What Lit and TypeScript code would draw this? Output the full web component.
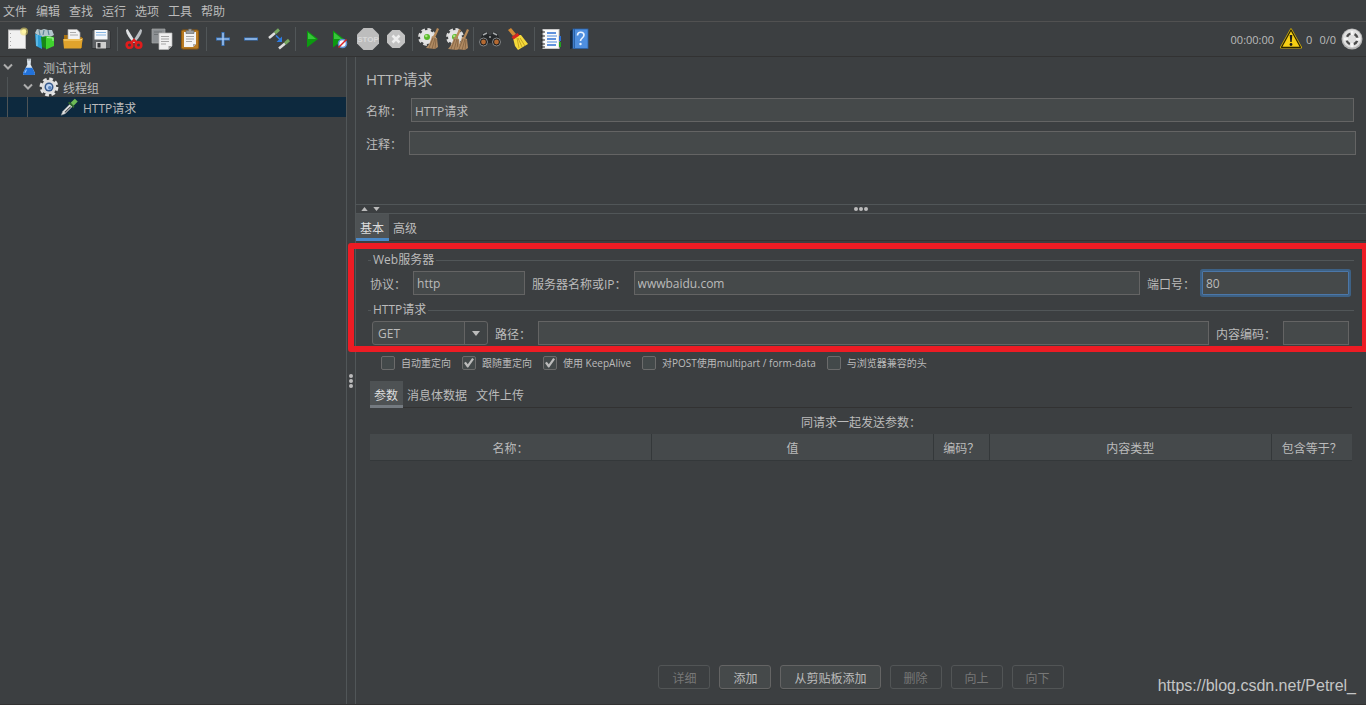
import { LitElement, html, css, svg, nothing } from "lit";
import { customElement, property } from "lit/decorators.js";
import { classMap } from "lit/directives/class-map.js";

const broom = svg`
  <path d="M20 1l2 1-4 9-2-1z" fill="#b88a58"/>
  <path d="M15 9l5 2 1 9-3 2-9-1c3-3 5-7 6-12z" fill="#b08a62"/>
  <path d="M16 11l-4 10M18 11l-3 11M19 12l-1 10" stroke="#80603f" stroke-width=".8" fill="none"/>`;

const smallGear = svg`
  <circle cx="10" cy="10" r="7.600" fill="none" stroke="#dcdcdc" stroke-width="2.600" stroke-dasharray="3.600 2.400"/>
  <circle cx="10" cy="10" r="7" fill="#e4e4e4"/>
  <circle cx="10" cy="10" r="3" fill="#58b82a"/>
  <circle cx="9.300" cy="9" r="1.300" fill="#a8e57e"/>`;

const icons: Record<string, unknown> = {
  blank: svg`
    <rect x="3.500" y="3" width="17" height="18.500" fill="#f1f1f1" stroke="#b9b9b9"/>
    <path d="M5.500 6v13" stroke="#aaa" stroke-dasharray="1 3"/>
    <circle cx="19" cy="4.500" r="4" fill="#f3e06a" opacity=".55"/>
    <circle cx="19" cy="4.500" r="2.200" fill="#fff6a4"/>`,
  templates: svg`
    <path d="M2 6l2-4 4 1 3-1 4 1 4 0 2 5-6 3-9-1z" fill="#b4c6cc"/>
    <path d="M6 3l1 5M11 3l-1 5M15 3l1 5" stroke="#5f8597" stroke-width="1.200"/>
    <path d="M2 7l7 2v13l-6-3z" fill="#2b9dd6"/>
    <path d="M4 8v11" stroke="#8ad2f5"/>
    <path d="M8 10l6-1v13l-5-2z" fill="#178817"/>
    <path d="M13 9l8 1v9l-8 3.500z" fill="#3fd22e"/>
    <path d="M14 10.500l6 .5v3" stroke="#a9f59d" fill="none"/>`,
  open: svg`
    <path d="M3 8h5l2 2h11v11H3z" fill="#a87110"/>
    <path d="M7 2.500h9l3 3v9H7z" fill="#f3f3f3" stroke="#a9a9a9" stroke-width=".7"/>
    <path d="M9 5.500h6M9 8h8" stroke="#999" stroke-width=".8"/>
    <path d="M2 12h17l3-1-2 10.500H3z" fill="#e0a32c"/>
    <path d="M3 13h16l2-.6" stroke="#ffd87b" fill="none"/>`,
  save: svg`
    <path d="M3 3h17l1.500 1.500V21.500H3z" fill="#5d6063" stroke="#2e3032" stroke-width=".8"/>
    <rect x="5.500" y="3" width="13" height="9.500" fill="#f4f7fa"/>
    <path d="M7 5.500h10M7 8h10" stroke="#85b5e2" stroke-width="1.200"/>
    <rect x="7" y="15" width="10" height="6.500" fill="#cfcfcf"/>
    <rect x="8.500" y="16" width="3" height="4.500" fill="#35373a"/>`,
  cut: svg`
    <path d="M5.500 2l8 13-2 1C8 12 4 7 4 3z" fill="#dfe2e4"/>
    <path d="M18.500 2l-8 13 2 1c3.500-4 7.500-9 7.500-13z" fill="#b9bec2"/>
    <circle cx="7.500" cy="18" r="2.800" fill="none" stroke="#e01c1c" stroke-width="2.600"/>
    <circle cx="16.500" cy="18" r="2.800" fill="none" stroke="#e01c1c" stroke-width="2.600"/>
    <path d="M9 16l3-3 3 3" stroke="#e01c1c" stroke-width="2.400" fill="none"/>`,
  copy: svg`
    <path d="M2 2h13v14H2z" fill="#8c9093" stroke="#a3a6a8" stroke-width=".7"/>
    <path d="M4 5h8M4 7.500h4" stroke="#6e7275"/>
    <path d="M9 6h13v13l-3.500 3.500H9z" fill="#f0f0f0" stroke="#b7b7b7" stroke-width=".7"/>
    <path d="M11 9.500h8M11 12h8M11 14.500h8M11 17h5" stroke="#a5a5a5"/>
    <path d="M22 19h-3.500v3.500z" fill="#9e9e9e"/>`,
  paste: svg`
    <rect x="3.500" y="3" width="17" height="19" rx="1.500" fill="#b87a22" stroke="#8d590f"/>
    <path d="M6 5h12v12l-3 3H6z" fill="#f3f3f3"/>
    <path d="M8 9.500h8M8 12h8M8 14.500h6" stroke="#a5a5a5"/>
    <path d="M18 17h-3v3z" fill="#aaa"/>
    <path d="M8 6.500V3.500h2.500V2h3v1.500H16v3z" fill="#9a9d9f" stroke="#5f6163" stroke-width=".6"/>`,
  plus: svg`<path d="M12 5v14M5 12h14" stroke="#3b78c2" stroke-width="3"/><path d="M12 6v12M6 12h12" stroke="#b9d5f7" stroke-width="1.200"/>`,
  minus: svg`<path d="M5 12h14" stroke="#3b78c2" stroke-width="3"/><path d="M6 12h12" stroke="#b9d5f7" stroke-width="1.200"/>`,
  toggle: svg`
    <path d="M2 11L8 6" stroke="#dedede" stroke-width="2.600"/><path d="M8 6l4-3.500" stroke="#76a860" stroke-width="3"/>
    <path d="M12 21.500l6-5" stroke="#dedede" stroke-width="2.600"/><path d="M18 16.500l4-3.500" stroke="#76a860" stroke-width="3"/>
    <path d="M9 8.500l4 4" stroke="#2f7be0" stroke-width="1.600"/><path d="M15 9.500V15H9.500z" fill="#2f7be0"/>`,
  start: svg`<path d="M7 3.500L18 12 7 20.500z" fill="#0c9a10"/><path d="M8 5.500L16 12H8z" fill="#37c53a"/>`,
  startNoPause: svg`
    <path d="M5 3.500L16 12 5 20.500z" fill="#0c9a10"/><path d="M6 5.500L14 12H6z" fill="#37c53a"/>
    <circle cx="14.500" cy="16.500" r="4" fill="#f4f8ff" stroke="#5d8fd0" stroke-width="1.600"/>
    <path d="M10.500 20.500l8-8" stroke="#dd2020" stroke-width="1.500"/>`,
  stop: svg`
    <path d="M7.500 1h9L23 7.500v9L16.500 23h-9L1 16.500v-9z" fill="#bdbdbd"/>
    <text x="12" y="15" text-anchor="middle" font-size="8" font-weight="700" font-family="Liberation Sans, sans-serif" fill="#d9d9d9">STOP</text>`,
  shutdown: svg`
    <path d="M8.300 3h7.400L21 8.300v7.400L15.700 21H8.300L3 15.700V8.300z" fill="#c2c2c2"/>
    <path d="M8.500 8.500l7 7M15.500 8.500l-7 7" stroke="#eee" stroke-width="2.600"/>`,
  clear: svg`${smallGear}${broom}`,
  clearAll: svg`${smallGear}<g transform="translate(-6 1)">${broom}</g><g transform="translate(2 1)">${broom}</g>`,
  search: svg`
    <path d="M5 6l4-1 2 3h2l2-3 4 1 4 9-4 4-6-3h-2l-6 3-4-4z" fill="#25282a"/>
    <path d="M5 8l4-2M15 6l4 2M11 10h2" stroke="#a5a8aa" stroke-width="1.400"/>
    <circle cx="5.500" cy="15" r="4" fill="#1b1c1d" stroke="#85888a"/><circle cx="5.500" cy="15" r="2.400" fill="#b56a32"/>
    <circle cx="18.500" cy="15" r="4" fill="#1b1c1d" stroke="#85888a"/><circle cx="18.500" cy="15" r="2.400" fill="#b56a32"/>`,
  reset: svg`
    <path d="M2 3l3-2 5 6-3 2z" fill="#d28a36"/>
    <path d="M9 8l6 0 7 9-10 6-3-4-2-8z" fill="#f4d93a"/>
    <path d="M11 11l2 10M14 11l5 8M12 11l4 9" stroke="#b8951a" stroke-width=".8"/>
    <path d="M5.500 10l6-4 2 2.500-6 4z" fill="#d7261e"/>`,
  functions: svg`
    <rect x="4" y="2.500" width="16" height="19" fill="#fafafa" stroke="#c9c9c9"/>
    <path d="M8 6h9M8 12h9M8 18h9" stroke="#2d6fd2" stroke-width="1.600"/><path d="M8 9h10M8 15h10" stroke="#4d8ae0"/>
    <path d="M2 5h4M2 9h4M2 13h4M2 17h4M2 20h4" stroke="#222" stroke-width="1.200"/>
    <path d="M20 9h2v5h-2z" fill="#2d6fd2"/><path d="M20 15h2v5h-2z" fill="#21a321"/>`,
  help: svg`
    <path d="M3 4l3-2v19l-3 1z" fill="#16283d"/>
    <rect x="6" y="2" width="15" height="19.500" fill="#4f8fdf" stroke="#2a62a8" stroke-width=".8"/>
    <path d="M7.500 2v19" stroke="#2a62a8"/>
    <path d="M10.500 8.500c0-4.500 6.500-4 6.500-.5 0 3-3.500 3-3.500 6" stroke="#eaf3ff" stroke-width="1.600" fill="none"/>
    <circle cx="13.500" cy="17" r="1.200" fill="#eaf3ff"/>`,
  warning: svg`
    <path d="M12 2.500L22 20.500H2z" fill="#f6cf14" stroke="#c9a80c" stroke-width="2.200" stroke-linejoin="round"/>
    <path d="M12 3L21.500 20.300h-19z" fill="#f6cf14" stroke="#2b2500" stroke-width="1.200" stroke-linejoin="round"/>
    <path d="M10.700 8h2.600l-.6 7h-1.400z" fill="#1d1d1d"/><circle cx="12" cy="17.500" r="1.400" fill="#1d1d1d"/>`,
  globe: svg`
    <circle cx="12" cy="12" r="10.500" fill="#b4b4b4"/><circle cx="12" cy="11.500" r="9.300" fill="#e0e0e0"/>
    <circle cx="12" cy="12" r="5.500" fill="none" stroke="#4b4b4b" stroke-width="2.400" stroke-dasharray="4.640 4" stroke-dashoffset="-2"/>
    <path d="M12 4v4M12 16v4M4 12h4M16 12h4" stroke="#f5f5f5" stroke-width="2.600"/>`,
  flask: svg`
    <path d="M9.500 2h5v1l-.5 6L19 19c.6 1.700 0 2.500-1.500 2.500h-11C5 21.500 4.400 20.700 5 19L10 9l-.5-6z" fill="#dde6ee"/>
    <path d="M8 13h8l3 6c.6 1.700 0 2.500-1.500 2.500h-11C5 21.500 4.400 20.700 5 19z" fill="#2372d9"/>
    <path d="M9 15l-2 4" stroke="#8fc1ff" stroke-width="1.500"/>
    <path d="M10 3.500h4" stroke="#777"/>`,
  gear: svg`
    <circle cx="12" cy="12" r="9.500" fill="none" stroke="#e5e5e5" stroke-width="3.600" stroke-dasharray="4.400 3.060"/>
    <circle cx="12" cy="12" r="8.800" fill="#dedede"/>
    <circle cx="12" cy="12" r="5.400" fill="#34588c"/><circle cx="12" cy="12" r="3.600" fill="#bcd3f2"/>
    <circle cx="13" cy="13" r="2.200" fill="#5b86c0"/>`,
  dropper: svg`
    <path d="M2.500 22l2-5 9-9 3 3-9 9z" fill="#e2e4e5" stroke="#7d8082" stroke-width=".6"/>
    <path d="M7 18.500l7-7" stroke="#4a4d4f" stroke-width="1.400"/>
    <path d="M11.500 6.500l6.500 6" stroke="#2f6a2a" stroke-width="2"/>
    <path d="M14 7l5-5 3.500 3.500-5 5z" fill="#6dbb55"/>`,
};

const base = css`
  :host { display: block; box-sizing: border-box; }
  *, *::before, *::after { box-sizing: border-box; }
  button, input, select { font: inherit; color: inherit; margin: 0; }
  .icon { display: block; width: 24px; height: 24px; flex: none; }
`;

const icon = (name: string) =>
  html`<svg class="icon" viewBox="0 0 24 24" aria-hidden="true">${icons[name]}</svg>`;

@customElement("app-toolbar")
class AppToolbar extends LitElement {
  static styles = [base, css`
    .menu { display: flex; height: 22px; border-bottom: 1px solid #515151; }
    .menu button { border: 0; background: none; padding: 2px 6px 0 3px; line-height: 19px; white-space: nowrap; }
    .bar { display: flex; align-items: center; height: 35px; padding: 0 2px 1px 3px; border-bottom: 1px solid #323232; }
    .tool { width: 28px; height: 28px; border: 0; padding: 2px; background: none; }
    .sep { width: 1px; height: 24px; margin: 0 2px; background: #515658; }
    .status { margin-left: auto; display: flex; align-items: center; font-size: 11px; }
    .status span { padding-top: 2px; }
    .time { margin-right: 5px; }
    .errors { margin: 0 7px 0 3px; }
    .threads { margin-right: 4px; }
  `];

  private menus = ["文件", "编辑", "查找", "运行", "选项", "工具", "帮助"];

  private groups: [string, string][][] = [
    [["blank", "新建"], ["templates", "模板"], ["open", "打开"], ["save", "保存"]],
    [["cut", "剪切"], ["copy", "复制"], ["paste", "粘贴"]],
    [["plus", "展开"], ["minus", "折叠"], ["toggle", "切换"]],
    [["start", "启动"], ["startNoPause", "不停顿开始"], ["stop", "停止"], ["shutdown", "关闭"]],
    [["clear", "清除"], ["clearAll", "清除全部"]],
    [["search", "查找"], ["reset", "重置查找"]],
    [["functions", "函数助手"], ["help", "帮助"]],
  ];

  render() {
    return html`
      <nav class="menu">${this.menus.map((m) => html`<button>${m}</button>`)}</nav>
      <div class="bar">
        ${this.groups.map((g, i) => html`
          ${i ? html`<span class="sep"></span>` : nothing}
          ${g.map(([name, label]) => html`<button class="tool" aria-label=${label}>${icon(name)}</button>`)}
        `)}
        <div class="status">
          <span class="time">00:00:00</span>${icon("warning")}
          <span class="errors">0</span><span class="threads">0/0</span>${icon("globe")}
        </div>
      </div>`;
  }
}

@customElement("plan-tree")
class PlanTree extends LitElement {
  static styles = [base, css`
    .row { display: flex; align-items: center; height: 20px; padding-left: 2px; white-space: nowrap; }
    .row.selected { background: #0d293e; }
    .guide { width: 20px; height: 20px; padding-left: 5px; }
    .guide::before { content: ""; display: block; width: 1px; height: 100%; background: #4f5456; }
    .twisty { width: 12px; margin-right: 5px; }
    .twisty svg { display: block; width: 12px; height: 12px; }
    .icon { width: 20px; height: 20px; margin-right: 4px; }
    .name { padding-top: 3px; }
  `];

  private rows = [
    { level: 0, icon: "flask", text: "测试计划", open: true },
    { level: 1, icon: "gear", text: "线程组", open: true },
    { level: 2, icon: "dropper", text: "HTTP请求", open: false },
  ];

  render() {
    return html`<div role="tree">${this.rows.map((r) => html`
      <div role="treeitem" class=${classMap({ row: true, selected: !r.open })}>
        ${Array.from({ length: r.level }, () => html`<span class="guide"></span>`)}
        <span class="twisty">${r.open
          ? html`<svg viewBox="0 0 12 12"><path d="M2 3.500l4 4 4-4" fill="none" stroke="#adadad" stroke-width="2"/></svg>`
          : nothing}</span>
        ${icon(r.icon)}<span class="name">${r.text}</span>
      </div>`)}</div>`;
  }
}

@customElement("tab-strip")
class TabStrip extends LitElement {
  @property({ attribute: false }) tabs: string[] = [];
  @property({ type: Boolean }) muted = false;

  static styles = [base, css`
    .strip { display: flex; height: 27px; border-bottom: 1px solid #323232; }
    button {
      height: 27px; border: 0; border-bottom: 3px solid transparent; background: none;
      padding: 5px 5px 0 4px; line-height: 18px; white-space: nowrap;
    }
    .active { background: #4e5254; border-bottom-color: #4a88c7; color: #dddddd; }
    .muted { border-bottom-color: #747a80; }
  `];

  render() {
    return html`<div class="strip" role="tablist">${this.tabs.map((t, i) => html`
      <button role="tab" aria-selected=${i === 0}
        class=${classMap({ active: i === 0, muted: i === 0 && this.muted })}>${t}</button>`)}</div>`;
  }
}

@customElement("http-request-panel")
class HttpRequestPanel extends LitElement {
  static styles = [base, css`
    :host { display: flex; flex-direction: column; min-width: 0; }
    h1 { margin: 0; font-size: 15px; line-height: 20px; font-weight: 400; }
    .text {
      height: 24px; min-width: 0; border: 1px solid #646464; border-radius: 0;
      background: #45494a; padding: 1px 3px 0; outline: none;
    }
    .grow { flex: 1; }
    label, legend { white-space: nowrap; }

    .head { height: 148px; padding: 12px 10px 0; border-bottom: 1px solid #515658; }
    .line { display: flex; align-items: center; margin-top: 9px; }
    .line label { width: 43px; padding-top: 3px; }
    .line .named { margin: 0 2px; }

    .splitter {
      display: grid; grid-template-columns: 1fr auto 1fr; align-items: center;
      height: 9px; padding: 0 5px; border-bottom: 1px solid #515658;
    }
    .arrows { display: flex; gap: 5px; }
    .arrows svg { display: block; width: 7px; height: 4px; fill: #bbbbbb; }
    .dots { display: flex; gap: 1px; }
    .dots i { width: 4px; height: 4px; border-radius: 50%; background: #bbbbbb; }

    .request { position: relative; display: flex; flex-direction: column; gap: 7px; padding: 11px 12px; }
    .request::after {
      content: ""; position: absolute; inset: 2px -2px 4px -8px;
      border: 6px solid #ed1c24; border-radius: 3px; pointer-events: none;
    }
    fieldset { margin: 0; border: 0; border-top: 1px solid #515658; padding: 0 5px 0 2px; min-width: 0; }
    legend { margin-left: 1px; padding: 0 2px; line-height: 16px; }
    .fields { display: flex; align-items: center; gap: 7px; padding-top: 3px; }
    .fields label { padding-top: 3px; }
    .protocol { width: 112px; }
    .port { width: 147px; border-color: #4b77a8; box-shadow: 0 0 0 2px #3d6185; border-radius: 1px; }
    .encoding { width: 66px; }
    .method { position: relative; margin-left: 2px; }
    .method select {
      display: block; width: 116px; height: 24px; padding: 1px 5px 0; appearance: none; outline: none;
      border: 1px solid #646464; border-radius: 3px;
      background: linear-gradient(90deg, #45494a 91px, #646464 91px 92px, #3f4345 92px);
    }
    .method svg { position: absolute; right: 8px; top: 10px; width: 8px; height: 5px; fill: #bbbbbb; pointer-events: none; }

    .options { display: flex; gap: 11px; padding: 0 25px; height: 14px; font-size: 10px; line-height: 14px; }
    .options label { display: flex; gap: 6px; }
    .options input {
      appearance: none; width: 14px; height: 14px; border: 1px solid #6b6b6b; border-radius: 2px;
      background: #43494a; display: grid; place-items: center;
    }
    .options input:checked::after {
      content: ""; width: 10px; height: 10px; background: #bbbbbb;
      clip-path: polygon(0 50%, 18% 38%, 38% 62%, 82% 0, 100% 12%, 42% 96%, 32% 96%);
    }

    .params { flex: 1; display: flex; flex-direction: column; padding: 11px 14px 15px; }
    table { width: 100%; border-collapse: collapse; table-layout: fixed; }
    caption { padding-top: 3px; line-height: 23px; }
    th {
      height: 26px; padding: 4px 0 0; font-weight: 400; background: #45494b;
      border-bottom: 1px solid #34383a; border-right: 1px solid #34383a;
    }
    th:last-child { border-right: 0; }
    .small { width: 56px; }
    .equals { width: 81px; }
    .actions { display: flex; justify-content: center; gap: 9px; margin-top: auto; }
    .actions button {
      height: 24px; padding: 3px 13px 0; border: 1px solid #646464; border-radius: 3px;
      background: #45494a; box-shadow: 0 1px 0 #353939; white-space: nowrap;
    }
    .actions button:disabled { background: none; color: #777777; border-color: #525556; box-shadow: none; }
  `];

  private options: [string, boolean][] = [
    ["自动重定向", false],
    ["跟随重定向", true],
    ["使用 KeepAlive", true],
    ["对POST使用multipart / form-data", false],
    ["与浏览器兼容的头", false],
  ];

  private actions: [string, boolean][] = [
    ["详细", false], ["添加", true], ["从剪贴板添加", true], ["删除", false], ["向上", false], ["向下", false],
  ];

  render() {
    return html`
      <section class="head">
        <h1>HTTP请求</h1>
        <div class="line"><label for="name">名称：</label><input id="name" class="text grow named" value="HTTP请求"></div>
        <div class="line"><label for="comment">注释：</label><input id="comment" class="text grow"></div>
      </section>
      <div class="splitter" role="separator">
        <span class="arrows">
          <svg viewBox="0 0 8 5"><path d="M0 5l4-5 4 5z"/></svg>
          <svg viewBox="0 0 8 5"><path d="M0 0l4 5 4-5z"/></svg>
        </span>
        <span class="dots"><i></i><i></i><i></i></span>
      </div>
      <tab-strip .tabs=${["基本", "高级"]}></tab-strip>
      <div class="request">
        <fieldset>
          <legend>Web服务器</legend>
          <div class="fields">
            <label for="protocol">协议：</label><input id="protocol" class="text protocol" value="http">
            <label for="server">服务器名称或IP：</label><input id="server" class="text grow" value="wwwbaidu.com">
            <label for="port">端口号：</label><input id="port" class="text port" value="80">
          </div>
        </fieldset>
        <fieldset>
          <legend>HTTP请求</legend>
          <div class="fields">
            <div class="method">
              <select aria-label="HTTP请求"><option>GET</option></select>
              <svg viewBox="0 0 10 6"><path d="M0 0h10L5 6z"/></svg>
            </div>
            <label for="path">路径：</label><input id="path" class="text grow">
            <label for="encoding">内容编码：</label><input id="encoding" class="text encoding">
          </div>
        </fieldset>
      </div>
      <div class="options">${this.options.map(([text, on]) => html`
        <label><input type="checkbox" .checked=${on}>${text}</label>`)}</div>
      <section class="params">
        <tab-strip muted .tabs=${["参数", "消息体数据", "文件上传"]}></tab-strip>
        <table>
          <caption>同请求一起发送参数：</caption>
          <thead><tr>
            <th>名称：</th><th>值</th><th class="small">编码？</th><th>内容类型</th><th class="equals">包含等于？</th>
          </tr></thead>
        </table>
        <div class="actions">${this.actions.map(([text, on]) => html`
          <button ?disabled=${!on}>${text}</button>`)}</div>
      </section>`;
  }
}

@customElement("app-root")
class AppRoot extends LitElement {
  static styles = [base, css`
    :host {
      position: relative; display: flex; flex-direction: column; min-height: 100vh; overflow: hidden;
      background: #3c3f41; color: #bbbbbb; line-height: 16px;
      font-size: 12px; font-family: "Open Sans", "Noto Sans CJK SC", sans-serif;
    }
    .main { flex: 1; display: flex; border-bottom: 1px solid #323232; }
    .tree { flex: none; width: 347px; border-right: 1px solid #515658; }
    .divider { flex: none; width: 8px; display: flex; flex-direction: column; align-items: center; justify-content: center; gap: 1px; }
    .divider i { width: 4px; height: 4px; border-radius: 50%; background: #bbbbbb; }
    .panel { flex: 1; border-left: 1px solid #515658; }
    .watermark {
      position: absolute; right: 10px; bottom: 9px; line-height: 20px; font-size: 16px;
      font-family: "Liberation Sans", sans-serif; color: #c4c5c5; text-decoration: none;
    }
  `];

  render() {
    return html`
      <app-toolbar></app-toolbar>
      <div class="main">
        <plan-tree class="tree"></plan-tree>
        <div class="divider" role="separator"><i></i><i></i><i></i></div>
        <http-request-panel class="panel"></http-request-panel>
      </div>
      <a class="watermark" href="https://blog.csdn.net/Petrel_">https://blog.csdn.net/Petrel_</a>`;
  }
}
